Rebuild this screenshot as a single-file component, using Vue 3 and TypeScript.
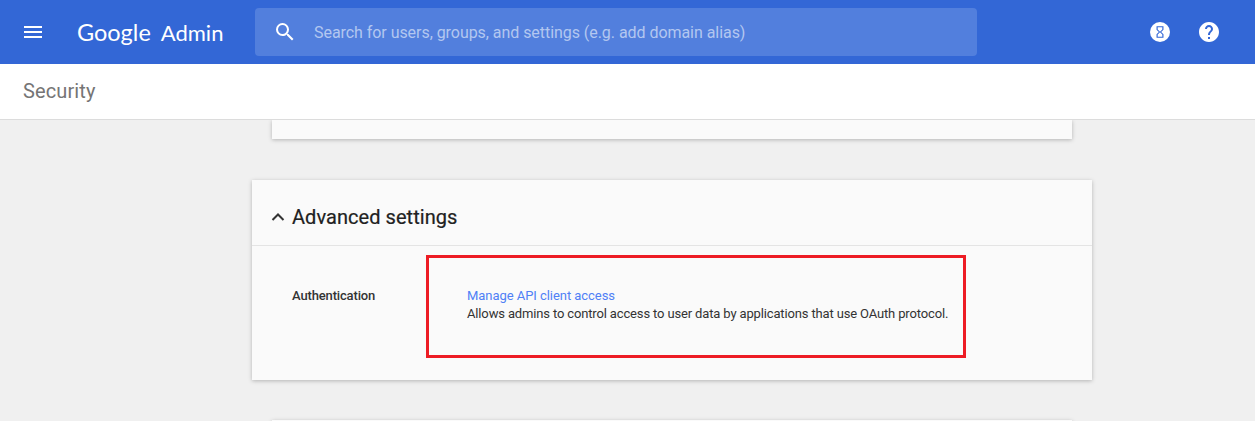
<script setup lang="ts">
const title: string = 'Security'
</script>

<template>
  <div class="page">
    <header class="bar">
      <button class="menu" aria-label="Main menu">
        <svg width="24" height="24" viewBox="0 0 24 24"><path d="M3 18h18v-2H3v2zm0-5h18v-2H3v2zm0-7v2h18V6H3z" fill="#fff" /></svg>
      </button>
      <div class="logo"><span class="g">Google</span><span class="a">Admin</span></div>
      <div class="search">
        <svg width="24" height="24" viewBox="0 0 24 24"><path d="M15.5 14h-.79l-.28-.27A6.47 6.47 0 0 0 16 9.5 6.5 6.5 0 1 0 9.5 16c1.61 0 3.09-.59 4.23-1.57l.27.28v.79l5 4.99L20.49 19l-4.99-5zm-6 0C7.01 14 5 11.99 5 9.5S7.01 5 9.5 5 14 7.01 14 9.5 11.99 14 9.5 14z" fill="#fff" /></svg>
        <span>Search for users, groups, and settings (e.g. add domain alias)</span>
      </div>
      <div class="actions">
        <svg width="24" height="24" viewBox="0 0 24 24">
          <circle cx="12" cy="12" r="10" fill="#fff" />
          <path transform="translate(12 12) scale(.58) translate(-12 -12)" d="M6 2v6h.01L6 8.01 10 12l-4 4 .01.01H6V22h12v-5.99h-.01L18 16l-4-4 4-3.99-.01-.01H18V2H6zm10 14.5V20H8v-3.5l4-4 4 4zm-4-5l-4-4V4h8v3.5l-4 4z" fill="#3367d6" />
        </svg>
        <svg width="24" height="24" viewBox="0 0 24 24"><path d="M12 2C6.48 2 2 6.48 2 12s4.48 10 10 10 10-4.48 10-10S17.52 2 12 2zm1 17h-2v-2h2v2zm2.07-7.75-.9.92C13.45 12.9 13 13.5 13 15h-2v-.5c0-1.1.45-2.1 1.17-2.83l1.24-1.26c.37-.36.59-.86.59-1.41 0-1.1-.9-2-2-2s-2 .9-2 2H8c0-2.21 1.79-4 4-4s4 1.79 4 4c0 .88-.36 1.68-.93 2.25z" fill="#fff" /></svg>
      </div>
    </header>

    <div class="crumb">{{ title }}</div>

    <main class="content">
      <div class="stub top"></div>

      <section class="card">
        <div class="card-head">
          <svg width="16" height="16" viewBox="0 0 16 16"><path d="M2.5 11 8 5.5 13.5 11" fill="none" stroke="#333" stroke-width="2" /></svg>
          <h2>Advanced settings</h2>
        </div>
        <div class="card-body">
          <div class="label">Authentication</div>
          <div class="detail">
            <a class="link">Manage API client access</a>
            <p>Allows admins to control access to user data by applications that use OAuth protocol.</p>
          </div>
          <div class="highlight"></div>
        </div>
      </section>

      <div class="stub bottom"></div>
    </main>
  </div>
</template>

<style>
html, body { margin: 0; overflow: hidden; }
</style>

<style scoped>
.page {
  width: 1255px;
  height: 421px;
  overflow: hidden;
  background: #f0f0f0;
  font-family: Roboto, "Liberation Sans", sans-serif;
}
.bar {
  height: 64px;
  background: #3367d6;
  display: flex;
  align-items: center;
  box-sizing: border-box;
  padding-left: 21px;
}
.menu {
  width: 24px;
  height: 24px;
  padding: 0;
  border: 0;
  background: none;
  display: block;
}
.logo {
  width: 178px;
  margin-left: 32px;
  display: flex;
  align-items: baseline;
  gap: 10px;
  color: #fff;
  font-family: Lato, sans-serif;
  line-height: 28px;
}
.logo .g { font-size: 23.5px; }
.logo .a { font-size: 22px; }
.search {
  width: 722px;
  height: 48px;
  box-sizing: border-box;
  padding-left: 18px;
  border-radius: 4px;
  background: #527fdd;
  display: flex;
  align-items: center;
  gap: 17px;
  color: #b3c7f0;
  font-size: 16px;
  letter-spacing: -0.05px;
}
.actions {
  margin-left: 171px;
  display: flex;
  gap: 25px;
}
.crumb {
  height: 56px;
  box-sizing: border-box;
  padding: 15px 0 0 23px;
  background: #fff;
  border-bottom: 1px solid #dcdcdc;
  color: #757575;
  font-size: 20px;
  line-height: 24px;
  letter-spacing: 0.12px;
  position: relative;
  z-index: 1;
}
.content {
  box-sizing: border-box;
  padding-left: 89px;
  display: flex;
  flex-direction: column;
  align-items: center;
}
.stub {
  width: 800px;
  background: #fafafa;
  box-shadow: 0 1px 4px rgba(0, 0, 0, 0.25);
}
.stub.top { height: 19px; margin-bottom: 41px; }
.stub.bottom { height: 20px; margin-top: 40px; }
.card {
  width: 840px;
  height: 200px;
  background: #fafafa;
  box-shadow: 0 1px 4px rgba(0, 0, 0, 0.25);
}
.card-head {
  height: 66px;
  box-sizing: border-box;
  padding: 8px 0 0 18px;
  border-bottom: 1px solid #e4e4e4;
  display: flex;
  align-items: center;
  gap: 6px;
}
h2 {
  margin: 0;
  font-size: 20px;
  font-weight: 400;
  letter-spacing: 0.05px;
  color: #212121;
  -webkit-text-stroke: 0.2px #212121;
}
.card-body {
  position: relative;
  display: flex;
  padding: 41px 0 0 40px;
  font-size: 13px;
  line-height: 18px;
  color: #333;
}
.label {
  width: 175px;
  font-weight: 500;
  letter-spacing: -0.15px;
}
.link {
  color: #4f80f6;
  display: block;
  letter-spacing: -0.05px;
}
.detail p {
  margin: 0;
  letter-spacing: -0.145px;
}
.highlight {
  position: absolute;
  left: 174px;
  top: 9px;
  width: 540px;
  height: 103px;
  box-sizing: border-box;
  border: 3px solid #ed1c24;
}
</style>
